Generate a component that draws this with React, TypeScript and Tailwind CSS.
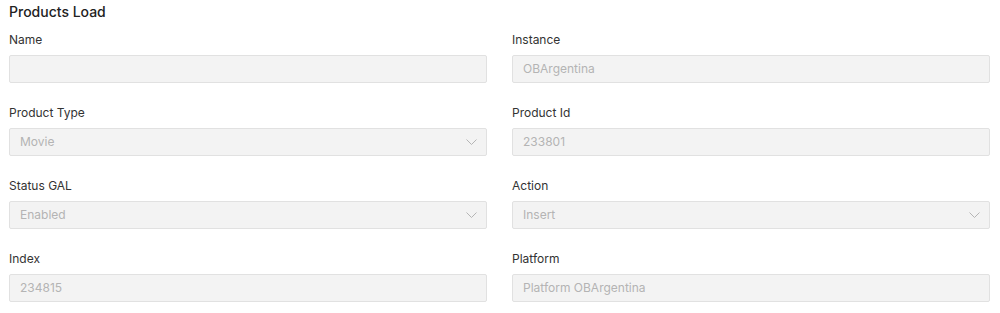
const FIELDS = [
  { label: 'Name', value: '', select: false },
  { label: 'Instance', value: 'OBArgentina', select: false },
  { label: 'Product Type', value: 'Movie', select: true },
  { label: 'Product Id', value: '233801', select: false },
  { label: 'Status GAL', value: 'Enabled', select: true },
  { label: 'Action', value: 'Insert', select: true },
  { label: 'Index', value: '234815', select: false },
  { label: 'Platform', value: 'Platform OBArgentina', select: false },
];

function Chevron() {
  return (
    <svg width="11" height="6" viewBox="0 0 11 6" fill="none" className="absolute right-[9px] top-1/2 -translate-y-1/2">
      <path d="M0.5 0.5l5 5 5-5" stroke="#b5b5b5" strokeWidth="1" />
    </svg>
  );
}

function Field({ label, value, select }: { label: string; value: string; select: boolean }) {
  return (
    <div className="flex flex-col">
      <label className="text-[12px] leading-[20px] text-[#333] mb-[5px]">{label}</label>
      <div className="relative h-[28px] rounded-[2px] border border-[#e1e1e1] bg-[#f3f3f3] px-[10px] flex items-center">
        <span className="text-[12px] text-[#b4b4b4]">{value}</span>
        {select && <Chevron />}
      </div>
    </div>
  );
}

export default function App() {
  return (
    <div className="w-[1000px] h-[313px] bg-white pl-[9px] pr-[10px] pt-[2px]" style={{ fontFamily: 'Inter, "Noto Sans", sans-serif' }}>
      <h2 className="text-[14px] leading-[20px] font-medium text-[#222]">Products Load</h2>
      <div className="grid grid-cols-2 gap-x-[25px] gap-y-[20px] mt-[8px]">
        {FIELDS.map((f) => (
          <Field key={f.label} {...f} />
        ))}
      </div>
    </div>
  );
}
